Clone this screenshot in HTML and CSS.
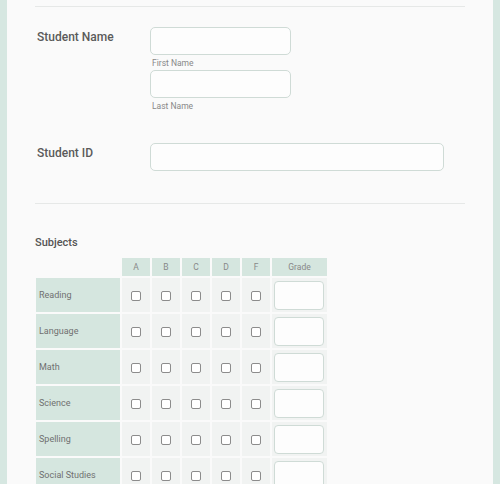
FILE: index.html
```html
<!DOCTYPE html>
<html lang="en">
<head>
    <meta charset="UTF-8">
    <meta name="viewport" content="width=device-width, initial-scale=1.0">
    <title>Student Grades</title>
    <link rel="stylesheet" href="styles.css">
</head>
<body>
    <div class="form-panel">
        <hr class="divider">

        <div class="field-row name-row">
            <label class="field-label">Student Name</label>
            <div class="field-inputs">
                <input type="text" class="text-input short">
                <span class="sub-label">First Name</span>
                <input type="text" class="text-input short">
                <span class="sub-label">Last Name</span>
            </div>
        </div>

        <div class="field-row id-row">
            <label class="field-label">Student ID</label>
            <div class="field-inputs">
                <input type="text" class="text-input wide">
            </div>
        </div>

        <hr class="divider">

        <div class="subjects">
            <h3 class="subjects-title">Subjects</h3>
            <table class="grade-table">
                <thead>
                    <tr>
                        <th class="blank"></th>
                        <th>A</th>
                        <th>B</th>
                        <th>C</th>
                        <th>D</th>
                        <th>F</th>
                        <th class="grade-col">Grade</th>
                    </tr>
                </thead>
                <tbody id="gradeRows"></tbody>
            </table>
        </div>
    </div>

    <script>
        // Build one row per subject
        const subjects = ['Reading', 'Language', 'Math', 'Science', 'Spelling', 'Social Studies'];
        const letters = ['A', 'B', 'C', 'D', 'F'];
        const body = document.getElementById('gradeRows');

        subjects.forEach(function (name) {
            const row = document.createElement('tr');
            let html = '<td class="subject">' + name + '</td>';
            letters.forEach(function () {
                html += '<td class="check"><input type="checkbox"></td>';
            });
            html += '<td class="grade"><input type="text" class="grade-input"></td>';
            row.innerHTML = html;
            body.appendChild(row);
        });
    </script>
</body>
</html>
```

FILE: styles.css
```css
body {
    margin: 0;
    background: #d6e7e1;
    font-family: Roboto, "Liberation Sans", Arial, sans-serif;
    color: #555;
}

.form-panel {
    margin: 0 7px;
    min-height: 484px;
    padding: 6px 28px 0;
    background: #fafafa;
    box-sizing: border-box;
}

.divider {
    margin: 0;
    border: 0;
    border-top: 1px solid #e6e8e7;
}

.field-row {
    display: flex;
    padding-left: 2px;
}

.name-row {
    margin-top: 20px;
}

.id-row {
    margin-top: 30px;
    margin-bottom: 32px;
}

.field-label {
    width: 113px;
    flex-shrink: 0;
    font-size: 12px;
    font-weight: 500;
    line-height: 16px;
    padding-top: 2px;
    color: #5a5a5a;
}

.field-inputs {
    display: flex;
    flex-direction: column;
    align-items: flex-start;
}

.text-input {
    height: 28px;
    box-sizing: border-box;
    border: 1px solid #cfdbd6;
    border-radius: 5px;
    background: #fdfdfd;
    margin: 0;
}

.short {
    width: 141px;
}

.wide {
    width: 294px;
}

.sub-label {
    font-size: 8.5px;
    color: #888;
    line-height: 12px;
    padding: 2px 0 1px 2px;
}

.subjects-title {
    margin: 32px 0 6px;
    font-size: 11px;
    font-weight: 500;
    color: #555;
    line-height: 14px;
}

.grade-table {
    border-collapse: separate;
    border-spacing: 2px;
    margin-left: -1px;
}

.grade-table th {
    width: 28px;
    height: 18px;
    padding: 0;
    background: #d5e6df;
    font-size: 8.5px;
    font-weight: normal;
    color: #888;
}

.grade-table th.blank {
    width: 84px;
    background: none;
}

.grade-table th.grade-col {
    width: 55px;
}

.grade-table td {
    height: 34px;
    padding: 0;
    background: #f1f3f2;
}

.grade-table td.subject {
    background: #d5e6df;
    font-size: 9px;
    color: #707070;
    padding-left: 3px;
}

.grade-table td.check {
    text-align: center;
}

.grade-table input[type="checkbox"] {
    appearance: none;
    width: 10px;
    height: 10px;
    margin: 0;
    border: 1px solid #8c8c8c;
    border-radius: 2px;
    background: #fff;
    vertical-align: middle;
}

.grade-table td.grade {
    padding: 0 3px 0 2px;
}

.grade-input {
    display: block;
    width: 50px;
    height: 29px;
    box-sizing: border-box;
    margin: 0;
    border: 1px solid #cfdbd6;
    border-radius: 4px;
    background: #fdfdfd;
}
```
